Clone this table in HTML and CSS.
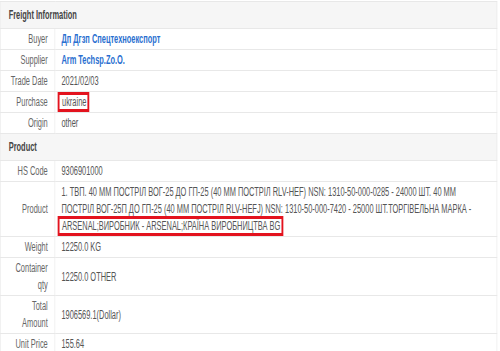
FILE: index.html
```html
<!DOCTYPE html>
<html>
<head>
<meta charset="utf-8">
<link rel="stylesheet" href="styles.css">
</head>
<body>
<div class="sheet">
  <table class="info">
    <tr><th class="section" colspan="2">Freight Information</th></tr>
    <tr><td class="label">Buyer</td><td class="value"><span class="link">Дп Дгзп Спецтехноекспорт</span></td></tr>
    <tr><td class="label">Supplier</td><td class="value"><span class="link">Arm Techsp.Zo.O.</span></td></tr>
    <tr><td class="label">Trade Date</td><td class="value">2021/02/03</td></tr>
    <tr><td class="label">Purchase</td><td class="value"><span class="mark">ukraine</span></td></tr>
    <tr><td class="label">Origin</td><td class="value">other</td></tr>
    <tr><th class="section" colspan="2">Product</th></tr>
    <tr><td class="label">HS Code</td><td class="value">9306901000</td></tr>
    <tr><td class="label">Product</td><td class="value">1. ТВП. 40 ММ ПОСТРІЛ ВОГ-25 ДО ГП-25 (40 ММ ПОСТРІЛ RLV-HEF) NSN: 1310-50-000-0285 - 24000 ШТ. 40 ММ ПОСТРІЛ ВОГ-25П ДО ГП-25 (40 ММ ПОСТРІЛ RLV-HEFJ) NSN: 1310-50-000-7420 - 25000 ШТ.ТОРГІВЕЛЬНА МАРКА - <span class="mark">ARSENAL;ВИРОБНИК - ARSENAL;КРАЇНА ВИРОБНИЦТВА BG</span></td></tr>
    <tr><td class="label">Weight</td><td class="value">12250.0 KG</td></tr>
    <tr><td class="label">Container qty</td><td class="value">12250.0 OTHER</td></tr>
    <tr><td class="label">Total Amount</td><td class="value">1906569.1(Dollar)</td></tr>
    <tr><td class="label">Unit Price</td><td class="value">155.64</td></tr>
  </table>
</div>
</body>
</html>
```
FILE: styles.css
```css
html, body {
  margin: 0;
  padding: 0;
  background: #fff;
}
body {
  padding: 1px 0 0 0;
  overflow: hidden;
}
.sheet {
  width: 802px;
  transform: scaleX(0.62);
  transform-origin: 0 0;
  font-family: "Liberation Sans", Arial, sans-serif;
  font-size: 12px;
  color: #555;
}
.info {
  width: 100%;
  border-collapse: collapse;
  border: 1px solid #e3e3e3;
}
.info th, .info td {
  border: 1px solid #e8e8e8;
  line-height: 17px;
  padding: 2px 24px 1px 10px;
  vertical-align: middle;
}
.info th.section {
  background: #f6f6f6;
  text-align: left;
  font-weight: bold;
  color: #444;
  padding: 5px 13px 4px;
}
.info td.label {
  width: 64px;
  padding-left: 12px;
  padding-right: 11px;
  text-align: right;
  color: #666;
}
.value {
  color: #555;
}
.link {
  color: #2a6fd0;
  font-weight: bold;
}
.mark {
  display: inline-block;
  vertical-align: top;
  border: 3px solid #e3131e;
  margin: -2px 0 -1px -6px;
  padding: 0 2px 0 4px;
  line-height: 14px;
}
```
